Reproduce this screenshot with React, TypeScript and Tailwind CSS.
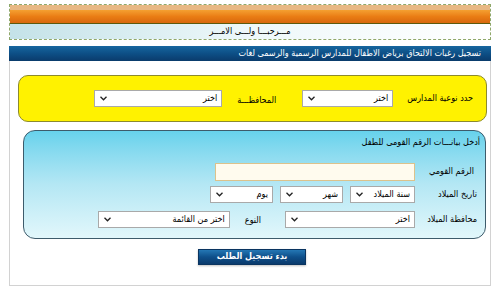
const ar = "font-['DejaVu_Sans_Condensed','DejaVu_Sans',sans-serif]";

function Chevron() {
  return (
    <svg width="7" height="5" viewBox="0 0 7 5" className="shrink-0">
      <polyline points="0.5,0.8 3.5,3.8 6.5,0.8" fill="none" stroke="#222" strokeWidth="1.3" />
    </svg>
  );
}

function Select({ label, w }: { label: string; w: string }) {
  return (
    <div className={`flex h-[17px] ${w} shrink-0 items-center justify-between border border-[#a9a9a9] bg-white pl-[5px] pr-[4px]`}>
      <span className="whitespace-nowrap text-[9px] leading-none text-black">{label}</span>
      <Chevron />
    </div>
  );
}

export default function App() {
  return (
    <div dir="rtl" className={`h-[300px] w-[500px] bg-white px-[9px] pt-[4px] ${ar}`}>
      {/* welcome header */}
      <div className="border border-dashed border-[#8fa86a]">
        <div className="h-[5px] bg-[#e8b884]" />
        <div className="h-[14px] border-b border-[#5c5a0c] bg-gradient-to-b from-[#f4a030] via-[#ea7d14] to-[#d8680e]" />
        <div className="flex h-[15px] items-center justify-center bg-gradient-to-l from-white via-[#eef8fa] to-[#c4e2e8] text-[9px] text-black">
          مـــرحبـــا ولـــى الامـــر
        </div>
      </div>

      {/* title bar */}
      <div className="mt-[6px] flex h-[15px] items-center whitespace-nowrap bg-gradient-to-b from-[#17679f] via-[#0d4f86] to-[#0a3b6c] pr-[10px] text-[9px] text-white">
        تسجيل رغبات الالتحاق برياض الاطفال للمدارس الرسمية والرسمى لغات
      </div>

      <div className="flex h-[225px] flex-col border-x border-b border-[#d2d2d2] pt-[14px]">
        {/* school type */}
        <div className="mr-[3px] flex h-[47px] w-[469px] items-center rounded-[10px] border border-[#8c8a2e] bg-[#fff200] pr-[13px]">
          <span className="whitespace-nowrap text-[9px] text-black">حدد نوعية المدارس</span>
          <div className="mr-[14px]">
            <Select label="اختر" w="w-[91px]" />
          </div>
          <span className="mr-[26px] whitespace-nowrap pt-[4px] text-[9px] text-black">المحافظـــة</span>
          <div className="mr-[15px]">
            <Select label="اختر" w="w-[128px]" />
          </div>
        </div>

        {/* child data */}
        <div className="mr-[4px] mt-[8px] h-[109px] w-[463px] rounded-[12px] border border-[#3d5b6b] bg-gradient-to-b from-[#66d2ec] via-[#b4e7f4] to-[#e2f7fb] pr-[5px] pt-[5px]">
          <div className="whitespace-nowrap text-[9px] leading-[13px] text-black">أدخل بيانـــات الرقم القومى للطفل</div>

          <div className="mt-[14px] flex items-center">
            <span className="w-[65px] shrink-0 whitespace-nowrap pr-[6px] text-[9px] text-black">الرقم القومي</span>
            <div className="h-[18px] w-[200px] border border-[#dcc28c] bg-[#fffbee]" />
          </div>

          <div className="mt-[5px] flex items-center">
            <span className="w-[65px] shrink-0 whitespace-nowrap pr-[3px] text-[9px] text-black">تاريخ الميلاد</span>
            <div className="flex gap-[7px]">
              <Select label="سنة الميلاد" w="w-[65px]" />
              <Select label="شهر" w="w-[63px]" />
              <Select label="يوم" w="w-[63px]" />
            </div>
          </div>

          <div className="mt-[8px] flex items-center">
            <span className="w-[65px] shrink-0 whitespace-nowrap pr-[3px] text-[9px] text-black">محافظة الميلاد</span>
            <Select label="اختر" w="w-[130px]" />
            <span className="mr-[24px] whitespace-nowrap pt-[2px] text-[9px] text-black">النوع</span>
            <div className="mr-[15px]">
              <Select label="اختر من القائمة" w="w-[132px]" />
            </div>
          </div>
        </div>

        {/* submit */}
        <div className="mt-[10px] flex justify-center">
          <button className="ml-[4px] flex h-[16px] w-[108px] items-center justify-center border border-[#0a3460] bg-gradient-to-b from-[#2477b4] via-[#0e4f8a] to-[#0a3a6c] text-[9px] font-bold text-white shadow-[0_1px_2px_rgba(0,0,0,0.25)]">
            بدء تسجيل الطلب
          </button>
        </div>
      </div>
    </div>
  );
}
